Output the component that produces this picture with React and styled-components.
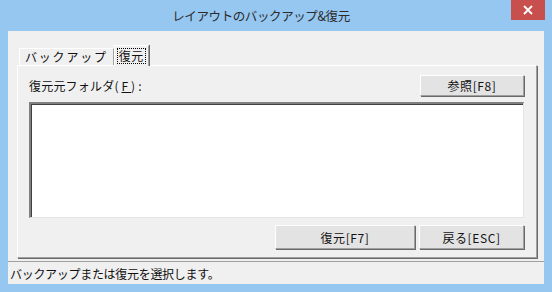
import React from "react";
import styled, { createGlobalStyle } from "styled-components";

const GlobalStyle = createGlobalStyle`
  html, body {
    margin: 0;
    padding: 0;
    background: #ffffff;
  }
  * {
    box-sizing: border-box;
  }
`;

const uiFont = `"Noto Sans CJK JP", "DejaVu Sans", sans-serif`;

// Window frame
const Frame = styled.div`
  position: relative;
  width: 552px;
  height: 292px;
  background: #95c7f1;
  padding: 0 8px 8px 8px;
  display: flex;
  flex-direction: column;
  font-family: ${uiFont};
`;

const TitleBar = styled.div`
  height: 31px;
  display: flex;
  align-items: center;
  justify-content: center;
  padding-right: 30px;
  font-size: 12.5px;
  color: #2b2b2b;
  letter-spacing: -0.4px;
`;

const CloseButton = styled.div`
  position: absolute;
  top: 0;
  right: 7px;
  width: 34px;
  height: 20px;
  background: #c7504f;
  color: #ffffff;
  display: flex;
  align-items: center;
  justify-content: center;
`;

const Client = styled.div`
  flex: 1;
  background: #f0f0f0;
  display: flex;
  flex-direction: column;
`;

const TabArea = styled.div`
  padding: 14px 7px 0 9px;
  display: flex;
  flex-direction: column;
`;

const TabStrip = styled.div`
  display: flex;
  align-items: flex-end;
  height: 20px;
  padding-left: 2px;
  position: relative;
  z-index: 1;
`;

const Tab = styled.div`
  height: ${(p) => (p.$active ? "21px" : "17px")};
  margin-bottom: ${(p) => (p.$active ? "-1px" : "0")};
  padding: 0 ${(p) => (p.$active ? "3px" : "5px")};
  font-size: 12px;
  line-height: 16px;
  color: #111;
  letter-spacing: ${(p) => (p.$active ? "0.5px" : "1.8px")};
  background: #f0f0f0;
  border-top: 1px solid #ffffff;
  border-left: 1px solid #ffffff;
  border-right: 1px solid #a0a0a0;
  box-shadow: 1px 0 0 #696969;
  display: flex;
  align-items: center;
`;

const FocusRect = styled.span`
  outline: 1px dotted #000;
  outline-offset: 0;
  padding: 0 1px;
  line-height: 14px;
`;

const Panel = styled.div`
  height: 193px;
  border-top: 1px solid #ffffff;
  border-left: 1px solid #ffffff;
  border-right: 1px solid #a0a0a0;
  border-bottom: 1px solid #a0a0a0;
  box-shadow: 1px 1px 0 #696969;
  padding: 9px 12px 0 11px;
  display: flex;
  flex-direction: column;
`;

const HeaderRow = styled.div`
  display: flex;
  justify-content: space-between;
  align-items: flex-end;
`;

const Label = styled.div`
  font-size: 12px;
  color: #111;
  letter-spacing: 0.2px;
  padding-bottom: 2px;
`;

const Mnemonic = styled.span`
  letter-spacing: 3px;
  u {
    text-decoration: underline;
  }
`;

const Button = styled.div`
  width: ${(p) => p.$w}px;
  height: ${(p) => p.$h}px;
  background: #e3e3e3;
  border-top: 1px solid #ffffff;
  border-left: 1px solid #ffffff;
  border-right: 1px solid #a0a0a0;
  border-bottom: 1px solid #a0a0a0;
  box-shadow: 1px 1px 0 #696969;
  display: flex;
  align-items: center;
  justify-content: center;
  font-size: 12px;
  color: #111;
  letter-spacing: 0.6px;
`;

const ListBox = styled.div`
  margin-top: 6px;
  height: 116px;
  background: #ffffff;
  border-top: 2px solid #808080;
  border-left: 2px solid #808080;
  border-right: 1px solid #e3e3e3;
  border-bottom: 1px solid #e3e3e3;
  box-shadow: inset 1px 1px 0 #404040;
`;

const ButtonRow = styled.div`
  margin-top: 7px;
  display: flex;
  justify-content: flex-end;
  gap: 4px;
`;

const StatusBar = styled.div`
  margin-top: auto;
  height: 23px;
  border-top: 1px solid #a0a0a0;
  display: flex;
  align-items: center;
  padding-left: 2px;
  font-size: 12px;
  color: #111;
  letter-spacing: -0.3px;
`;

export default function App() {
  return (
    <>
      <GlobalStyle />
      <Frame>
        <TitleBar>レイアウトのバックアップ&amp;復元</TitleBar>
        <CloseButton>
          <svg width="10" height="10" viewBox="0 0 10 10">
            <path d="M1 1 L9 9 M9 1 L1 9" stroke="#fff" strokeWidth="1.8" />
          </svg>
        </CloseButton>
        <Client>
          <TabArea>
            <TabStrip>
              <Tab>バックアップ</Tab>
              <Tab $active>
                <FocusRect>復元</FocusRect>
              </Tab>
            </TabStrip>
            <Panel>
              <HeaderRow>
                <Label>
                  復元元フォルダ
                  <Mnemonic>
                    (<u>F</u>):
                  </Mnemonic>
                </Label>
                <Button $w={104} $h={21}>参照[F8]</Button>
              </HeaderRow>
              <ListBox />
              <ButtonRow>
                <Button $w={140} $h={24}>復元[F7]</Button>
                <Button $w={105} $h={24}>戻る[ESC]</Button>
              </ButtonRow>
            </Panel>
          </TabArea>
          <StatusBar>バックアップまたは復元を選択します。</StatusBar>
        </Client>
      </Frame>
    </>
  );
}
